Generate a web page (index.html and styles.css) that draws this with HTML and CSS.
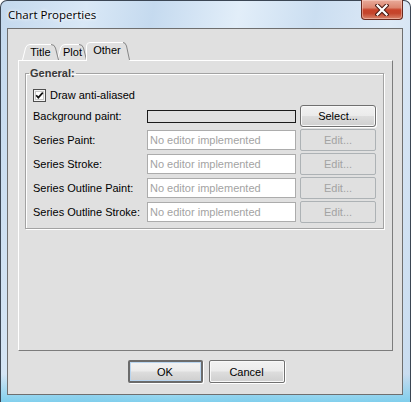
FILE: index.html
```html
<!DOCTYPE html>
<html>
<head>
<meta charset="utf-8">
<link rel="stylesheet" href="styles.css">
</head>
<body>
<div class="window">
  <div class="titlebar">
    <span class="title">Chart Properties</span>
    <div class="close">
      <svg width="14" height="12" viewBox="0 0 14 12">
        <path d="M2.5,1.5 L11.5,10.5 M11.5,1.5 L2.5,10.5" stroke="#4a1a12" stroke-width="4.2" stroke-linecap="square"/>
        <path d="M2.5,1.5 L11.5,10.5 M11.5,1.5 L2.5,10.5" stroke="#ffffff" stroke-width="2.2" stroke-linecap="square"/>
      </svg>
    </div>
  </div>
  <div class="client">
    <div class="tabs">
      <div class="tab tab-title">
        <svg class="tab-shape" width="37" height="16" viewBox="0 0 37 16">
          <path d="M0.5,16 L3.5,4 Q4.5,0.5 8,0.5 L29,0.5 Q32.5,0.5 33.5,4 L36.5,16 Z" fill="#e0e0e0"/>
          <path d="M0.5,16 L3.5,4 Q4.5,0.5 8,0.5 L29,0.5" fill="none" stroke="#ffffff"/>
          <path d="M29,0.5 Q32.5,0.5 33.5,4 L36.5,16" fill="none" stroke="#858585"/>
        </svg>
        <span class="tab-label">Title</span>
      </div>
      <div class="tab tab-plot">
        <svg class="tab-shape" width="30" height="16" viewBox="0 0 30 16">
          <path d="M0.5,16 L3.5,4 Q4.5,0.5 8,0.5 L22,0.5 Q25.5,0.5 26.5,4 L29.5,16 Z" fill="#e0e0e0"/>
          <path d="M0.5,16 L3.5,4 Q4.5,0.5 8,0.5 L22,0.5" fill="none" stroke="#ffffff"/>
          <path d="M22,0.5 Q25.5,0.5 26.5,4 L29.5,16" fill="none" stroke="#858585"/>
        </svg>
        <span class="tab-label">Plot</span>
      </div>
      <div class="tab tab-other">
        <svg class="tab-shape" width="44" height="19" viewBox="0 0 44 19">
          <path d="M0.5,19 L0.5,4 Q0.5,0.5 4,0.5 L37,0.5 Q39.5,0.5 40.5,4 L43.5,18 L43.5,19 Z" fill="#e0e0e0"/>
          <path d="M0.5,19 L0.5,4 Q0.5,0.5 4,0.5 L37,0.5" fill="none" stroke="#ffffff"/>
          <path d="M37,0.5 Q39.5,0.5 40.5,4 L43.5,18" fill="none" stroke="#858585"/>
        </svg>
        <span class="tab-label">Other</span>
      </div>
    </div>
    <div class="panel">
      <fieldset class="group">
        <legend class="group-title">General:</legend>
        <div class="check-row">
          <svg class="checkbox" width="13" height="13" viewBox="0 0 13 13">
            <rect x="0.5" y="0.5" width="12" height="12" fill="#f4f4f4" stroke="#4e4e4e"/>
            <rect x="2.5" y="2.5" width="8" height="8" fill="#ffffff" stroke="#c8c8c8"/>
            <path d="M3.2,6.2 L5.3,8.6 L9.8,3.6" fill="none" stroke="#111111" stroke-width="1.7"/>
          </svg>
          <span>Draw anti-aliased</span>
        </div>
        <div class="row">
          <span class="label">Background paint:</span>
          <div class="swatch"></div>
          <button class="btn btn-small">Select...</button>
        </div>
        <div class="row">
          <span class="label">Series Paint:</span>
          <div class="field">No editor implemented</div>
          <button class="btn btn-small" disabled>Edit...</button>
        </div>
        <div class="row">
          <span class="label">Series Stroke:</span>
          <div class="field">No editor implemented</div>
          <button class="btn btn-small" disabled>Edit...</button>
        </div>
        <div class="row">
          <span class="label">Series Outline Paint:</span>
          <div class="field">No editor implemented</div>
          <button class="btn btn-small" disabled>Edit...</button>
        </div>
        <div class="row">
          <span class="label">Series Outline Stroke:</span>
          <div class="field">No editor implemented</div>
          <button class="btn btn-small" disabled>Edit...</button>
        </div>
      </fieldset>
    </div>
    <div class="actions">
      <button class="btn btn-action btn-default">OK</button>
      <button class="btn btn-action">Cancel</button>
    </div>
  </div>
</div>
</body>
</html>
```

FILE: styles.css
```css
html, body {
  margin: 0;
  padding: 0;
  background: #ffffff;
}

.window {
  position: relative;
  box-sizing: border-box;
  width: 411px;
  height: 402px;
  border: 1px solid #3b4654;
  border-bottom: none;
  border-radius: 7px 7px 0 0;
  padding: 0 7px 7px 6px;
  display: flex;
  flex-direction: column;
  background:
    linear-gradient(to bottom, rgba(255,255,255,0) 93%, rgba(120,205,236,0.9) 100%),
    linear-gradient(100deg, #c3d8ed 0%, #d9e8f6 18%, #c5daef 32%, #e2eef9 50%, #cbdef1 66%, #dde9f6 82%, #c7dbef 100%);
}

.titlebar {
  height: 27px;
  flex: none;
  padding: 6px 0 0 1px;
  box-sizing: border-box;
}

.title {
  font-family: "Open Sans", "Noto Sans", sans-serif;
  font-size: 11.5px;
  line-height: 16px;
  color: #000000;
  text-shadow: 0 0 5px #ffffff, 0 0 3px #ffffff;
  display: block;
}

.close {
  position: absolute;
  top: -1px;
  right: 7px;
  width: 42px;
  height: 20px;
  box-sizing: border-box;
  border: 1px solid #6a2a1e;
  border-top: none;
  border-radius: 0 0 4px 4px;
  background: linear-gradient(to bottom, #e9ab9a 0%, #dc8670 40%, #c8432a 52%, #c4452c 70%, #d8846b 100%);
  box-shadow: inset 0 0 0 1px rgba(255,220,210,0.45);
  display: flex;
  align-items: center;
  justify-content: center;
}

.client {
  flex: 1;
  box-sizing: border-box;
  border: 1px solid #6f6f6f;
  background: #e0e0e0;
  padding: 13px 9px 0 10px;
  display: flex;
  flex-direction: column;
  font-family: "Liberation Sans", Arial, sans-serif;
  font-size: 11px;
  color: #000000;
}

.tabs {
  display: flex;
  align-items: flex-end;
  height: 18px;
  padding-left: 4px;
  position: relative;
  z-index: 1;
}

.tab {
  position: relative;
  height: 16px;
  display: flex;
  justify-content: center;
}

.tab-shape {
  position: absolute;
  left: 0;
  top: 0;
}

.tab-label {
  position: relative;
  line-height: 16px;
  padding-top: 0;
}

.tab-title {
  width: 37px;
  z-index: 3;
}

.tab-plot {
  width: 30px;
  margin-left: -2px;
  z-index: 2;
}

.tab-plot .tab-label {
  padding-left: 1px;
}

.tab-other {
  width: 44px;
  height: 19px;
  margin-left: -1px;
  margin-bottom: -1px;
  z-index: 4;
}

.tab-other .tab-label {
  padding-top: 1px;
  line-height: 15px;
  padding-right: 2px;
}

.panel {
  height: 291px;
  box-sizing: border-box;
  border: 1px solid #7c7c7c;
  border-top-color: #ffffff;
  border-left-color: #ffffff;
  padding: 6px 8px 0 6px;
}

.group {
  margin: 0;
  border: 1px solid #a3a3a3;
  box-shadow: 1px 1px 0 #ffffff, inset 1px 1px 0 #ffffff;
  padding: 7px 7px 4px 7px;
}

.group-title {
  font-weight: bold;
  color: #3a3a3a;
  line-height: 12px;
  padding: 0 1px;
  margin-left: -4px;
}

.check-row {
  height: 18px;
  display: flex;
  align-items: center;
  gap: 4px;
}

.checkbox {
  display: block;
  margin-top: 1px;
}

.row {
  height: 24px;
  display: flex;
  align-items: center;
}

.label {
  width: 114px;
  flex: none;
}

.field {
  width: 149px;
  height: 20px;
  box-sizing: border-box;
  border: 1px solid #acacac;
  background: #ffffff;
  color: #a3a3a3;
  padding-left: 2px;
  line-height: 18px;
  flex: none;
}

.swatch {
  width: 149px;
  height: 13px;
  box-sizing: border-box;
  border: 1px solid #1a1a1a;
  background: #e0e0e0;
  flex: none;
}

.btn {
  font-family: "Liberation Sans", Arial, sans-serif;
  font-size: 11px;
  color: #000000;
  padding: 0;
  margin: 0;
  box-sizing: border-box;
  border: 1px solid #707070;
  border-radius: 3px;
  background: linear-gradient(to bottom, #f2f2f2 0%, #ebebeb 48%, #dddddd 52%, #cfcfcf 100%);
  box-shadow: inset 0 0 0 1px #f8f8f8, 1px 1px 0 #ffffff;
}

.btn-small {
  width: 76px;
  height: 22px;
  margin-left: 4px;
  flex: none;
}

.btn:disabled {
  color: #a3a3a3;
  background: #e0e0e0;
  border-color: #adb2b5;
  box-shadow: none;
  border-radius: 2px;
}

.actions {
  display: flex;
  justify-content: center;
  gap: 6px;
  margin-top: 9px;
  padding-left: 1px;
}

.btn-action {
  width: 76px;
  height: 23px;
  border-radius: 2px;
}

.btn-default {
  width: 75px;
  border: 2px solid #6b6b6b;
  box-shadow: inset 0 0 0 1px #b9d5ef, 1px 1px 0 #ffffff;
}
```
